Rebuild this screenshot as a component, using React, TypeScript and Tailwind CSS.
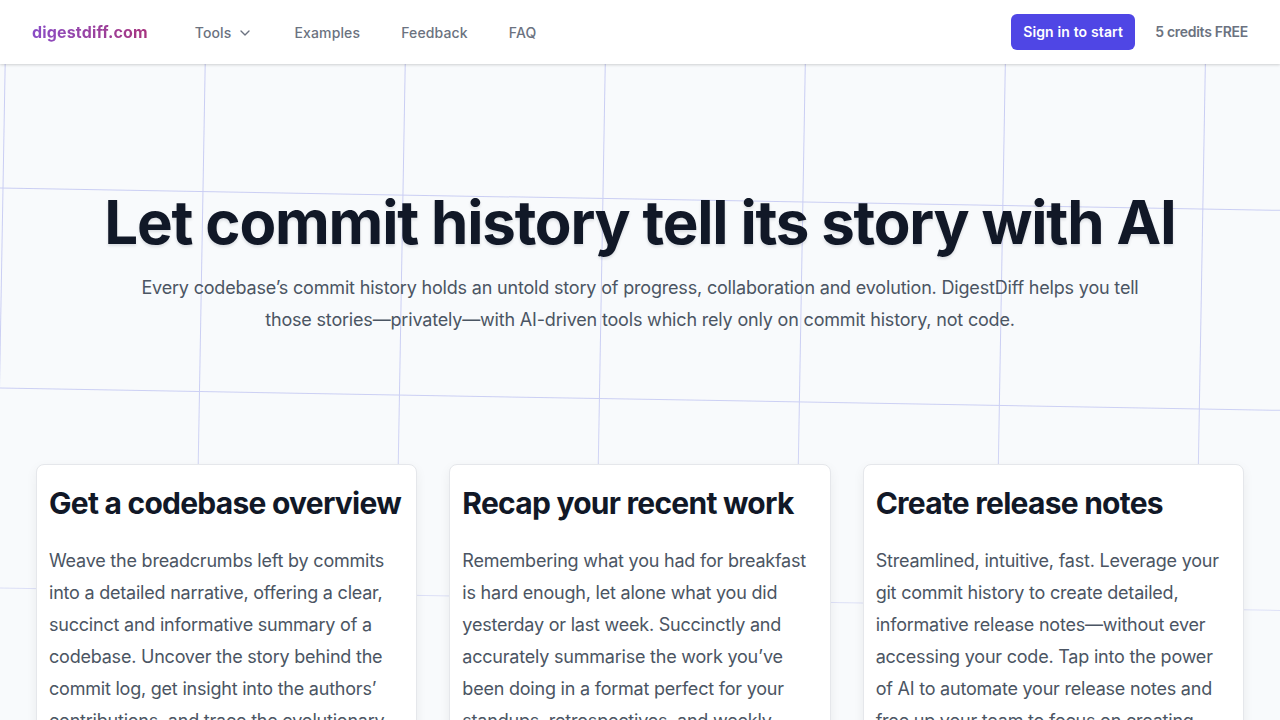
import React from "react";
import { ChevronDown } from "lucide-react";

const vLines = Array.from({ length: 14 }, (_, i) => 3 + 200 * (i - 3));
const hLines = Array.from({ length: 10 }, (_, i) => 188 + 200 * (i - 3));

function GridBackground() {
  return (
    <svg
      className="pointer-events-none absolute left-0 top-0 h-full w-full"
      xmlns="http://www.w3.org/2000/svg"
      preserveAspectRatio="none"
    >
      <defs>
        <linearGradient id="fade" x1="0" y1="0" x2="0" y2="1">
          <stop offset="0" stopColor="#fff" stopOpacity="1" />
          <stop offset="0.55" stopColor="#fff" stopOpacity="0.95" />
          <stop offset="0.85" stopColor="#fff" stopOpacity="0.55" />
          <stop offset="1" stopColor="#fff" stopOpacity="0.45" />
        </linearGradient>
        <mask id="gridmask" maskUnits="userSpaceOnUse" x="0" y="0" width="1280" height="720">
          <rect x="0" y="0" width="1280" height="720" fill="url(#fade)" />
        </mask>
      </defs>
      <g mask="url(#gridmask)">
        <g transform="rotate(1 0 188)" stroke="#c9cdf3" strokeWidth="1" fill="none">
          {vLines.map((x) => (
            <line key={"v" + x} x1={x} y1={-600} x2={x} y2={1400} />
          ))}
          {hLines.map((y) => (
            <line key={"h" + y} x1={-600} y1={y} x2={1900} y2={y} />
          ))}
        </g>
      </g>
    </svg>
  );
}

const cards = [
  {
    title: "Get a codebase overview",
    body: "Weave the breadcrumbs left by commits into a detailed narrative, offering a clear, succinct and informative summary of a codebase. Uncover the story behind the commit log, get insight into the authors’ contributions, and trace the evolutionary path of the project.",
  },
  {
    title: "Recap your recent work",
    body: "Remembering what you had for breakfast is hard enough, let alone what you did yesterday or last week. Succinctly and accurately summarise the work you’ve been doing in a format perfect for your standups, retrospectives, and weekly reports.",
  },
  {
    title: "Create release notes",
    body: "Streamlined, intuitive, fast. Leverage your git commit history to create detailed, informative release notes—without ever accessing your code. Tap into the power of AI to automate your release notes and free up your team to focus on creating great software.",
  },
];

export default function App() {
  return (
    <div
      className="relative min-h-screen overflow-hidden bg-[#f8fafc] antialiased"
      style={{ fontFamily: "Inter, 'Noto Sans', sans-serif" }}
    >
      <GridBackground />

      <header className="relative z-10 flex h-16 items-center justify-between bg-white px-8 shadow-[0_1px_3px_rgba(0,0,0,0.12),0_1px_2px_rgba(0,0,0,0.06)]">
        <div className="flex items-center">
          <span className="bg-gradient-to-r from-[#8a4cc6] to-[#a7337f] bg-clip-text text-base font-bold tracking-[0.01em] text-transparent">
            digestdiff.com
          </span>
          <nav className="ml-[47px] mt-0.5 flex items-center gap-[41px] text-sm font-medium tracking-[0.01em] text-[#6b7280]">
            <span className="flex items-center gap-1.5">
              Tools
              <ChevronDown size={16} strokeWidth={2} className="text-[#6b7280]" />
            </span>
            <span>Examples</span>
            <span>Feedback</span>
            <span>FAQ</span>
          </nav>
        </div>
        <div className="flex items-center gap-5">
          <button className="rounded-md bg-[#4f46e5] px-3 py-2 text-sm font-semibold tracking-[0.01em] text-white">
            Sign in to start
          </button>
          <span className="text-sm font-semibold tracking-[-0.02em] text-[#6b7280]">5 credits FREE</span>
        </div>
      </header>

      <main className="relative z-0">
        <section className="pt-32 text-center">
          <h1 className="text-6xl font-bold tracking-[-0.02em] text-[#111827] [text-shadow:0_2px_3px_rgba(17,24,39,0.12)]">
            Let commit history tell its story with AI
          </h1>
          <p className="mx-auto mt-5 max-w-5xl text-lg leading-8 tracking-[-0.01em] text-[#4b5563]">
            Every codebase’s commit history holds an untold story of progress, collaboration and
            evolution. DigestDiff helps you tell those stories—privately—with AI-driven tools which
            rely only on commit history, not code.
          </p>
        </section>

        <section className="mt-32 grid grid-cols-3 gap-8 px-9">
          {cards.map((c) => (
            <div
              key={c.title}
              className="rounded-lg border border-[#e5e7eb] bg-white px-3 pb-6 pt-5 shadow-[0_4px_12px_rgba(0,0,0,0.06)]"
            >
              <h2 className="mb-6 text-3xl font-bold tracking-tight text-[#111827]">{c.title}</h2>
              <p className="text-lg leading-8 tracking-[-0.012em] text-[#4b5563]">{c.body}</p>
            </div>
          ))}
        </section>
      </main>
    </div>
  );
}
